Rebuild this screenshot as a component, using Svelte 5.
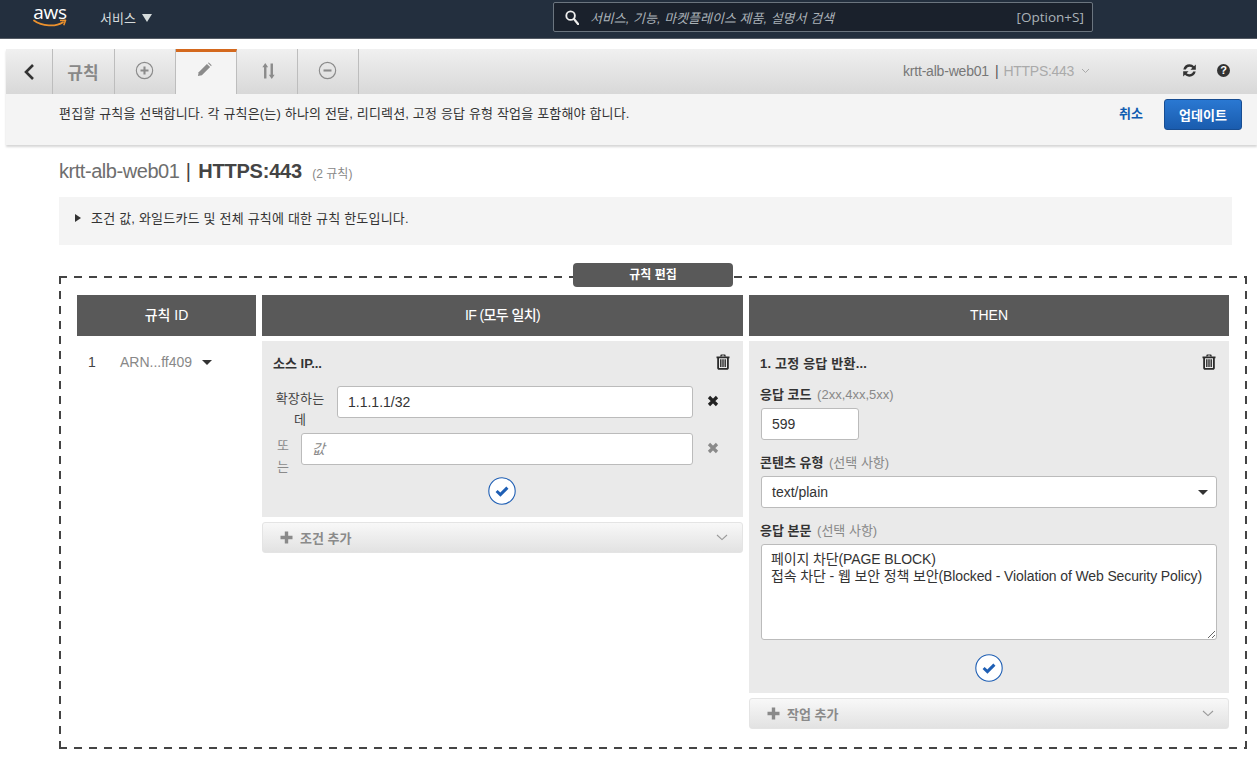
<script lang="ts">
const tabs = ["add", "edit", "sort", "remove"];
</script>

<div class="page">
	<header class="nav">
		<div class="logo">
			<span class="logo-text">aws</span>
			<svg class="smile" width="34" height="9" viewBox="0 0 34 9">
				<path d="M1 1.5C9 7.5 23 8 30 3.2" fill="none" stroke="#ec912d" stroke-width="1.8" stroke-linecap="round" />
				<path d="M27 1.6L32.6 1.2L30.8 6.2" fill="none" stroke="#ec912d" stroke-width="1.5" stroke-linejoin="round" />
			</svg>
		</div>
		<div class="services">서비스 <span class="tri"></span></div>
		<div class="search">
			<svg width="14" height="15" viewBox="0 0 15 16">
				<circle cx="6" cy="6" r="4.6" fill="none" stroke="#eee" stroke-width="2" />
				<path d="M9.5 9.5L14 15" stroke="#eee" stroke-width="2.4" stroke-linecap="round" />
			</svg>
			<span class="search-text">서비스, 기능, 마켓플레이스 제품, 설명서 검색</span>
			<span class="search-key">[Option+S]</span>
		</div>
	</header>

	<section class="panel">
		<div class="toolbar">
			<div class="tab back">
				<svg width="12" height="18" viewBox="0 0 12 18"><path d="M10 2L3 9L10 16" fill="none" stroke="#333" stroke-width="2.6" /></svg>
			</div>
			<div class="tab label">규칙</div>
			{#each tabs as t}
				<div class="tab icon {t}" class:active={t === "edit"}>
					{#if t === "add"}
						<svg width="19" height="19" viewBox="0 0 20 20">
							<circle cx="10" cy="10" r="8.6" fill="none" stroke="#8b8b8b" stroke-width="1.2" />
							<path d="M10 5.8V14.2M5.8 10H14.2" stroke="#8b8b8b" stroke-width="2.2" />
						</svg>
					{:else if t === "edit"}
						<svg width="15" height="15" viewBox="0 0 16 16">
							<path d="M1 15L1.8 10.8L10.6 2L14 5.4L5.2 14.2Z" fill="#8b8b8b" />
							<path d="M11.6 1L12.6 0.4L15.6 3.4L15 4.4Z" fill="#8b8b8b" />
						</svg>
					{:else if t === "sort"}
						<svg width="13" height="18" viewBox="0 0 14 18">
							<path d="M3.5 0.5L6.6 5H4.8V17H2.2V5H0.4Z" fill="#8b8b8b" />
							<path d="M10.5 17.5L13.6 13H11.8V1H9.2V13H7.4Z" fill="#8b8b8b" />
						</svg>
					{:else}
						<svg width="19" height="19" viewBox="0 0 20 20">
							<circle cx="10" cy="10" r="8.6" fill="none" stroke="#8b8b8b" stroke-width="1.2" />
							<path d="M5.8 10H14.2" stroke="#8b8b8b" stroke-width="2.2" />
						</svg>
					{/if}
				</div>
			{/each}
			<div class="tool-right">
				<span class="crumb">krtt-alb-web01</span>
				<span class="crumb-sep">|</span>
				<span class="crumb-light">HTTPS:443</span>
				<svg class="crumb-chev" width="9" height="6" viewBox="0 0 9 6"><path d="M1 1L4.5 4.5L8 1" fill="none" stroke="#aaa" /></svg>
				<svg class="refresh" width="15" height="15" viewBox="0 0 14 14">
					<path d="M1.2 6C1.8 3 4.2 1.2 7 1.2C8.8 1.2 10.2 2 11.2 3L12.9 1.3V6.3H7.9L9.7 4.5C9 3.8 8.1 3.4 7 3.4C5.4 3.4 4.2 4.4 3.6 6Z" fill="#333" />
					<path d="M12.8 8C12.2 11 9.8 12.8 7 12.8C5.2 12.8 3.8 12 2.8 11L1.1 12.7V7.7H6.1L4.3 9.5C5 10.2 5.9 10.6 7 10.6C8.6 10.6 9.8 9.6 10.4 8Z" fill="#333" />
				</svg>
				<span class="help">?</span>
			</div>
		</div>
		<div class="desc">
			<p>편집할 규칙을 선택합니다. 각 규칙은(는) 하나의 전달, 리디렉션, 고정 응답 유형 작업을 포함해야 합니다.</p>
			<span class="cancel">취소</span>
			<button class="update">업데이트</button>
		</div>
	</section>

	<h1 class="title"><span class="lb">krtt-alb-web01</span> <span class="bar">|</span> <b>HTTPS:443</b> <small>(2 규칙)</small></h1>

	<div class="notice"><span class="caret"></span>조건 값, 와일드카드 및 전체 규칙에 대한 규칙 한도입니다.</div>

	<div class="editor">
		<div class="legend">규칙 편집</div>
		<div class="cols">
			<div class="col-id">
				<div class="head">규칙 ID</div>
				<div class="rule-row">
					<span class="num">1</span>
					<span class="arn">ARN...ff409</span>
					<span class="arn-tri"></span>
				</div>
			</div>
			<div class="col-if">
				<div class="head">IF (모두 일치)</div>
				<div class="card if-card">
					<div class="card-title">
						<span>소스 IP...</span>
						<svg class="trash" width="14" height="16" viewBox="0 0 14 16">
							<path d="M0.5 2.4H13.5V4.2H12.8V14C12.8 15 12 15.8 11 15.8H3C2 15.8 1.2 15 1.2 14V4.2H0.5ZM3 4.2V14H11V4.2ZM4.1 5.2H5.5V13H4.1ZM6.3 5.2H7.7V13H6.3ZM8.5 5.2H9.9V13H8.5Z" fill="#2b2b2b" fill-rule="evenodd" />
							<path d="M4 2.6L4.8 0.4H9.2L10 2.6H8.4L8 1.6H6L5.6 2.6Z" fill="#2b2b2b" />
						</svg>
					</div>
					<div class="ip-row first">
						<span class="ip-label">확장하는 데</span>
						<input class="field" value="1.1.1.1/32" />
						<svg class="del" width="12" height="12" viewBox="0 0 12 12"><path d="M2 2L10 10M10 2L2 10" stroke="#222" stroke-width="3.2" /></svg>
					</div>
					<div class="ip-row second">
						<span class="or-label">또는</span>
						<input class="field" placeholder="값" />
						<svg class="del" width="12" height="12" viewBox="0 0 12 12"><path d="M2 2L10 10M10 2L2 10" stroke="#8a8a8a" stroke-width="3.2" /></svg>
					</div>
					<div class="confirm if-confirm">
						<svg width="28" height="28" viewBox="0 0 28 28">
							<circle cx="14" cy="14" r="13.2" fill="#fff" stroke="#1f5fb4" stroke-width="1.1" />
							<path d="M8.6 14L12.4 17.6L19.4 10.6" fill="none" stroke="#1f5fb4" stroke-width="3" />
						</svg>
					</div>
				</div>
				<div class="add-bar">
					<svg width="13" height="13" viewBox="0 0 13 13"><path d="M6.5 0.5V12.5M0.5 6.5H12.5" stroke="#8a8a8a" stroke-width="3.4" /></svg>
					<span>조건 추가</span>
					<svg class="chev" width="12" height="7" viewBox="0 0 12 7"><path d="M1 1L6 5.6L11 1" fill="none" stroke="#999" stroke-width="1.1" /></svg>
				</div>
			</div>
			<div class="col-then">
				<div class="head">THEN</div>
				<div class="card then-card">
					<div class="card-title then-title">
						<span>1. 고정 응답 반환...</span>
						<svg class="trash" width="14" height="16" viewBox="0 0 14 16">
							<path d="M0.5 2.4H13.5V4.2H12.8V14C12.8 15 12 15.8 11 15.8H3C2 15.8 1.2 15 1.2 14V4.2H0.5ZM3 4.2V14H11V4.2ZM4.1 5.2H5.5V13H4.1ZM6.3 5.2H7.7V13H6.3ZM8.5 5.2H9.9V13H8.5Z" fill="#2b2b2b" fill-rule="evenodd" />
							<path d="M4 2.6L4.8 0.4H9.2L10 2.6H8.4L8 1.6H6L5.6 2.6Z" fill="#2b2b2b" />
						</svg>
					</div>
					<div class="form-label">응답 코드 <em>(2xx,4xx,5xx)</em></div>
					<input class="field code" value="599" />
					<div class="form-label">콘텐츠 유형 <em>(선택 사항)</em></div>
					<div class="field select">text/plain<span class="sel-tri"></span></div>
					<div class="form-label">응답 본문 <em>(선택 사항)</em></div>
					<textarea class="field body">페이지 차단(PAGE BLOCK)
접속 차단 - 웹 보안 정책 보안(Blocked - Violation of Web Security Policy)</textarea>
					<div class="confirm then-confirm">
						<svg width="28" height="28" viewBox="0 0 28 28">
							<circle cx="14" cy="14" r="13.2" fill="#fff" stroke="#1f5fb4" stroke-width="1.1" />
							<path d="M8.6 14L12.4 17.6L19.4 10.6" fill="none" stroke="#1f5fb4" stroke-width="3" />
						</svg>
					</div>
				</div>
				<div class="add-bar">
					<svg width="13" height="13" viewBox="0 0 13 13"><path d="M6.5 0.5V12.5M0.5 6.5H12.5" stroke="#8a8a8a" stroke-width="3.4" /></svg>
					<span>작업 추가</span>
					<svg class="chev" width="12" height="7" viewBox="0 0 12 7"><path d="M1 1L6 5.6L11 1" fill="none" stroke="#999" stroke-width="1.1" /></svg>
				</div>
			</div>
		</div>
	</div>
</div>

<style>
	:global(body) {
		margin: 0;
		background: #fff;
		font-family: "Liberation Sans", "Noto Sans CJK KR", sans-serif;
		color: #333;
		overflow: hidden;
	}

	.page {
		height: 760px;
		overflow: hidden;
	}

	/* Top nav */
	.nav {
		height: 38px;
		background: #232f3e;
		border-bottom: 1px solid #545b64;
		display: flex;
		align-items: center;
		position: relative;
	}

	.logo {
		margin-left: 32px;
		width: 36px;
		height: 30px;
		display: flex;
		flex-direction: column;
		align-items: center;
		margin-top: -4px;
	}

	.logo-text {
		color: #fff;
		font-family: "Open Sans", sans-serif;
		font-size: 19px;
		line-height: 20px;
		letter-spacing: -0.2px;
	}

	.smile {
		margin-top: -3px;
	}

	.services {
		margin-left: 32px;
		margin-top: -3px;
		color: #d5dbdb;
		font-size: 13px;
		display: flex;
		align-items: center;
		gap: 6px;
	}

	.tri {
		width: 0;
		height: 0;
		border-left: 5.5px solid transparent;
		border-right: 5.5px solid transparent;
		border-top: 8px solid #d5dbdb;
		display: inline-block;
	}

	.search {
		margin-left: 401px;
		width: 540px;
		height: 30px;
		box-sizing: border-box;
		border: 1px solid #6b757f;
		border-radius: 2px;
		background: #1a212c;
		display: flex;
		align-items: center;
		padding: 0 8px 0 11px;
		margin-top: -4px;
	}

	.search-text {
		margin-left: 11px;
		font-style: italic;
		font-size: 13px;
		color: #aab2b8;
		flex: 1;
	}

	.search-key {
		font-family: "Open Sans", sans-serif;
		font-size: 13.5px;
		color: #aab2b8;
	}

	/* Toolbar */
	.panel {
		margin: 10px 0 0 6px;
		box-shadow: 0 2px 2px rgba(0, 0, 0, 0.16);
		width: 1251px;
	}

	.toolbar {
		height: 45px;
		background: linear-gradient(#f0f0f0, #d8d8d8);
		display: flex;
		align-items: stretch;
	}

	.tab {
		display: flex;
		align-items: center;
		justify-content: center;
		border-right: 1px solid #bdbdbd;
		box-sizing: border-box;
		position: relative;
	}

	.back {
		width: 47px;
		margin-right: 3px;
		padding-right: 1px;
	}

	.label {
		width: 59px;
		margin-right: 3px;
		padding: 0 4px 0 0;
		font-size: 17px;
		font-weight: bold;
		color: #888;
	}

	.icon {
		width: 58px;
		margin-right: 3px;
		padding-bottom: 2px;
		background: linear-gradient(#f0f0f0, #d8d8d8);
	}

	.icon.add {
		margin-right: 0;
		padding-right: 4px;
	}

	.icon.remove {
		padding-right: 4px;
	}

	.tab.active {
		width: 61px;
		background: #f4f4f4;
		border-top: 3px solid #d4691e;
		padding: 0 4px 7px 0;
	}

	.tool-right {
		margin-left: auto;
		display: flex;
		align-items: center;
		padding-bottom: 2px;
		font-size: 14px;
	}

	.crumb {
		color: #777;
		letter-spacing: -0.2px;
	}

	.crumb-sep {
		color: #555;
		margin: 0 5px 0 6px;
	}

	.crumb-light {
		color: #aaa;
		letter-spacing: -0.3px;
	}

	.crumb-chev {
		margin-left: 7px;
	}

	.refresh {
		margin-left: 92px;
	}

	.help {
		margin: 0 27px 0 20px;
		width: 13px;
		height: 13px;
		border-radius: 50%;
		background: #333;
		color: #fff;
		font-size: 11px;
		font-weight: bold;
		line-height: 13px;
		text-align: center;
	}

	.desc {
		height: 51px;
		background: #f4f4f4;
		display: flex;
		align-items: flex-start;
		font-size: 13px;
		box-sizing: border-box;
	}

	.desc p {
		margin: 11px 0 0 53px;
		line-height: 18px;
		flex: 1;
		color: #333;
		letter-spacing: 0.17px;
	}

	.cancel {
		color: #0f5cb0;
		font-weight: bold;
		margin: 12px 21px 0 0;
		line-height: 16px;
	}

	.update {
		width: 78px;
		height: 31px;
		margin: 5px 15px 0 0;
		background: linear-gradient(#2a78d2, #1a5cae);
		border: 1px solid #174d92;
		border-radius: 3px;
		color: #fff;
		font-family: inherit;
		font-weight: bold;
		font-size: 13px;
		padding: 0 0 1px;
	}

	/* Page title */
	.title {
		margin: 14px 0 0 59px;
		font-size: 20px;
		font-weight: normal;
		line-height: 24px;
		color: #666;
		letter-spacing: -0.2px;
	}

	.title .lb {
		letter-spacing: -0.45px;
		color: #6e6e6e;
	}

	.title b {
		color: #444;
	}

	.title .bar {
		color: #444;
		margin: 0 2px 0 1px;
	}

	.title small {
		font-size: 12px;
		color: #888;
		margin-left: 5px;
		letter-spacing: 0;
	}

	.notice {
		margin: 11px 25px 0 59px;
		height: 48px;
		background: #f4f4f4;
		font-size: 13px;
		line-height: 44px;
		padding-left: 16px;
		display: flex;
		align-items: flex-start;
		letter-spacing: 0.2px;
	}

	.caret {
		width: 0;
		height: 0;
		border-top: 4.5px solid transparent;
		border-bottom: 4.5px solid transparent;
		border-left: 6px solid #333;
		margin: 17px 10px 0 0;
	}

	/* Dashed editor box, long dashes that a CSS border can't give */
	.editor {
		--dash-x: repeating-linear-gradient(90deg, #444 0 8px, transparent 8px 15px);
		--dash-y: repeating-linear-gradient(180deg, #444 0 8px, transparent 8px 15px);
		position: relative;
		margin: 31px 10px 0 59px;
		height: 473px;
		background:
			var(--dash-x) top left / 100% 2px no-repeat,
			var(--dash-x) bottom left / 100% 2px no-repeat,
			var(--dash-y) top left / 2px 100% no-repeat,
			var(--dash-y) top right / 2px 100% no-repeat;
		box-sizing: border-box;
		padding: 19px 18px 0 18px;
	}

	.legend {
		position: absolute;
		top: -13px;
		left: 514px;
		width: 160px;
		height: 24px;
		background: #595959;
		border-radius: 4px;
		color: #fff;
		font-size: 12px;
		font-weight: bold;
		line-height: 24px;
		text-align: center;
	}

	.cols {
		display: grid;
		grid-template-columns: 179px 481px 480px;
		gap: 6px;
		align-items: start;
	}

	.head {
		height: 41px;
		background: #595959;
		color: #fff;
		font-size: 14px;
		line-height: 40px;
		text-align: center;
		margin-bottom: 5px;
		font-weight: 500;
	}

	.col-if .head {
		letter-spacing: -0.6px;
	}

	.rule-row {
		display: flex;
		align-items: center;
		font-size: 14px;
		padding: 9px 0 0 11px;
		line-height: 24px;
	}

	.num {
		width: 32px;
		color: #444;
	}

	.arn {
		color: #888;
	}

	.arn-tri {
		margin-left: 10px;
		border-left: 5px solid transparent;
		border-right: 5px solid transparent;
		border-top: 5px solid #333;
	}

	.card {
		background: #eaeaea;
		box-sizing: border-box;
		padding: 0 50px 0 11px;
	}

	.if-card {
		height: 176px;
	}

	.then-card {
		height: 352px;
		padding: 0 12px;
	}

	.card-title {
		display: flex;
		justify-content: space-between;
		align-items: center;
		font-size: 13px;
		font-weight: bold;
		height: 44px;
		box-sizing: border-box;
		padding-bottom: 2px;
		color: #333;
	}

	.if-card .card-title {
		margin-right: -37px;
	}

	.then-title {
		margin: 0 1px 0 -1px;
		letter-spacing: 0.2px;
	}

	.ip-row {
		display: flex;
		align-items: flex-start;
		font-size: 13px;
		position: relative;
	}

	.ip-row.first {
		height: 47px;
		margin-top: 1px;
	}

	.ip-row.second {
		height: 40px;
	}

	.ip-label {
		width: 54px;
		margin-right: 10px;
		flex: none;
		text-align: center;
		color: #444;
		line-height: 21px;
		padding-top: 2px;
		box-sizing: border-box;
		letter-spacing: 0.2px;
	}

	.or-label {
		width: 20px;
		margin-right: 8px;
		flex: none;
		text-align: center;
		color: #8a8a8a;
		line-height: 21px;
		padding: 2px 0 0 0;
		box-sizing: border-box;
	}

	.field {
		box-sizing: border-box;
		background: #fff;
		border: 1px solid #bbb;
		border-radius: 3px;
		font-family: inherit;
		font-size: 14px;
		color: #333;
		height: 32px;
		padding: 0 10px;
		outline: none;
		flex: 1;
		min-width: 0;
	}

	.field::placeholder {
		font-style: italic;
		color: #888;
	}

	.del {
		position: absolute;
		right: -26px;
		top: 9px;
	}

	.confirm {
		display: flex;
		justify-content: center;
	}

	.if-confirm {
		margin: 4px -37px 0 0;
	}

	.then-confirm {
		margin-top: 14px;
	}

	.add-bar {
		margin-top: 5px;
		height: 31px;
		box-sizing: border-box;
		border: 1px solid #e4e4e4;
		border-radius: 3px;
		background: linear-gradient(#f8f8f8, #e2e2e2);
		display: flex;
		align-items: center;
		padding: 0 14px 0 17px;
		font-size: 13px;
		font-weight: bold;
		color: #8a8a8a;
	}

	.add-bar span {
		margin-left: 7px;
	}

	.chev {
		margin-left: auto;
	}

	.form-label {
		font-size: 13px;
		font-weight: bold;
		color: #333;
		line-height: 20px;
		margin-bottom: 3px;
		margin-left: -1px;
	}

	.form-label em {
		font-style: normal;
		font-weight: normal;
		color: #888;
		margin-left: 2px;
	}

	.field.code {
		display: block;
		width: 98px;
		margin-bottom: 13px;
		height: 32px;
	}

	.field.select {
		height: 32px;
		line-height: 30px;
		position: relative;
		margin-bottom: 13px;
	}

	.sel-tri {
		position: absolute;
		right: 8px;
		top: 13px;
		border-left: 5px solid transparent;
		border-right: 5px solid transparent;
		border-top: 5px solid #333;
	}

	.field.body {
		display: block;
		width: 100%;
		height: 96px;
		padding: 6px 9px;
		line-height: 17px;
		resize: vertical;
		font-size: 14px;
		letter-spacing: -0.12px;
	}
</style>
